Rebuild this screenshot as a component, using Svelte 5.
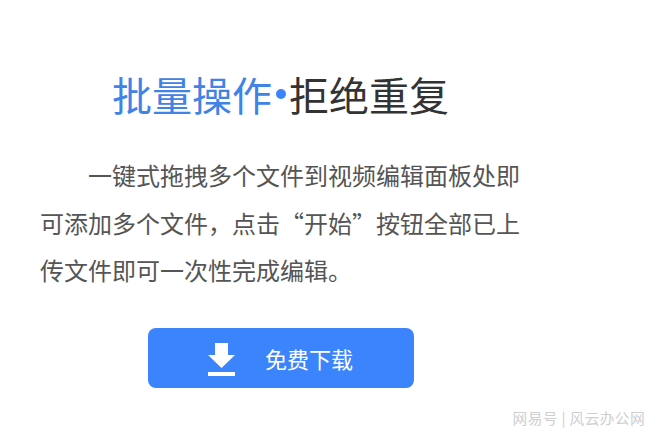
<script>
  const desc = "一键式拖拽多个文件到视频编辑面板处即可添加多个文件，点击“开始”按钮全部已上传文件即可一次性完成编辑。";
</script>

<div class="page" lang="zh-CN">
  <h1 class="title"><span class="blue">批量操作</span><span class="dot"></span>拒绝重复</h1>
  <p class="desc">{desc}</p>
  <button class="download">
    <svg class="icon" viewBox="0 0 27 33" width="27" height="33">
      <path d="M7 0h13v12h7L13.5 25 0 12h7z" fill="#fff" />
      <rect x="0" y="29" width="27" height="4" fill="#fff" />
    </svg>
    <span>免费下载</span>
  </button>
  <div class="mark">网易号 | 风云办公网</div>
</div>

<style>
  :global(body) {
    margin: 0;
    background: #fff;
  }
  .page {
    width: 659px;
    height: 439px;
    box-sizing: border-box;
    padding: 70px 0 0 40px;
    overflow: hidden;
    font-family: "Noto Sans CJK SC", "Liberation Sans", sans-serif;
    display: flex;
    flex-direction: column;
  }
  .title {
    margin: 0 0 0 72px;
    display: flex;
    align-items: center;
    font-size: 40px;
    line-height: 48px;
    font-weight: 400;
    color: #333;
  }
  .blue {
    color: #3f83e6;
  }
  .dot {
    width: 10px;
    height: 10px;
    margin: 0 3px 0 4px;
    border-radius: 50%;
    background: #3b84fb;
  }
  .desc {
    width: 480px;
    margin: 33px 0 0;
    font-size: 24px;
    line-height: 47.5px;
    text-indent: 48px;
    color: #555;
  }
  .download {
    width: 266px;
    height: 60px;
    margin: 34px 0 0 108px;
    padding: 0 0 0 60px;
    border: none;
    border-radius: 8px;
    background: #3b84fb;
    color: #fff;
    font-family: inherit;
    font-size: 22px;
    display: flex;
    align-items: center;
    gap: 30px;
  }
  .icon {
    margin-top: 3px;
  }
  .mark {
    align-self: flex-end;
    margin: 19px 14px 0 0;
    font-size: 14.7px;
    letter-spacing: 0.4px;
    color: #cfcfcf;
  }
</style>
